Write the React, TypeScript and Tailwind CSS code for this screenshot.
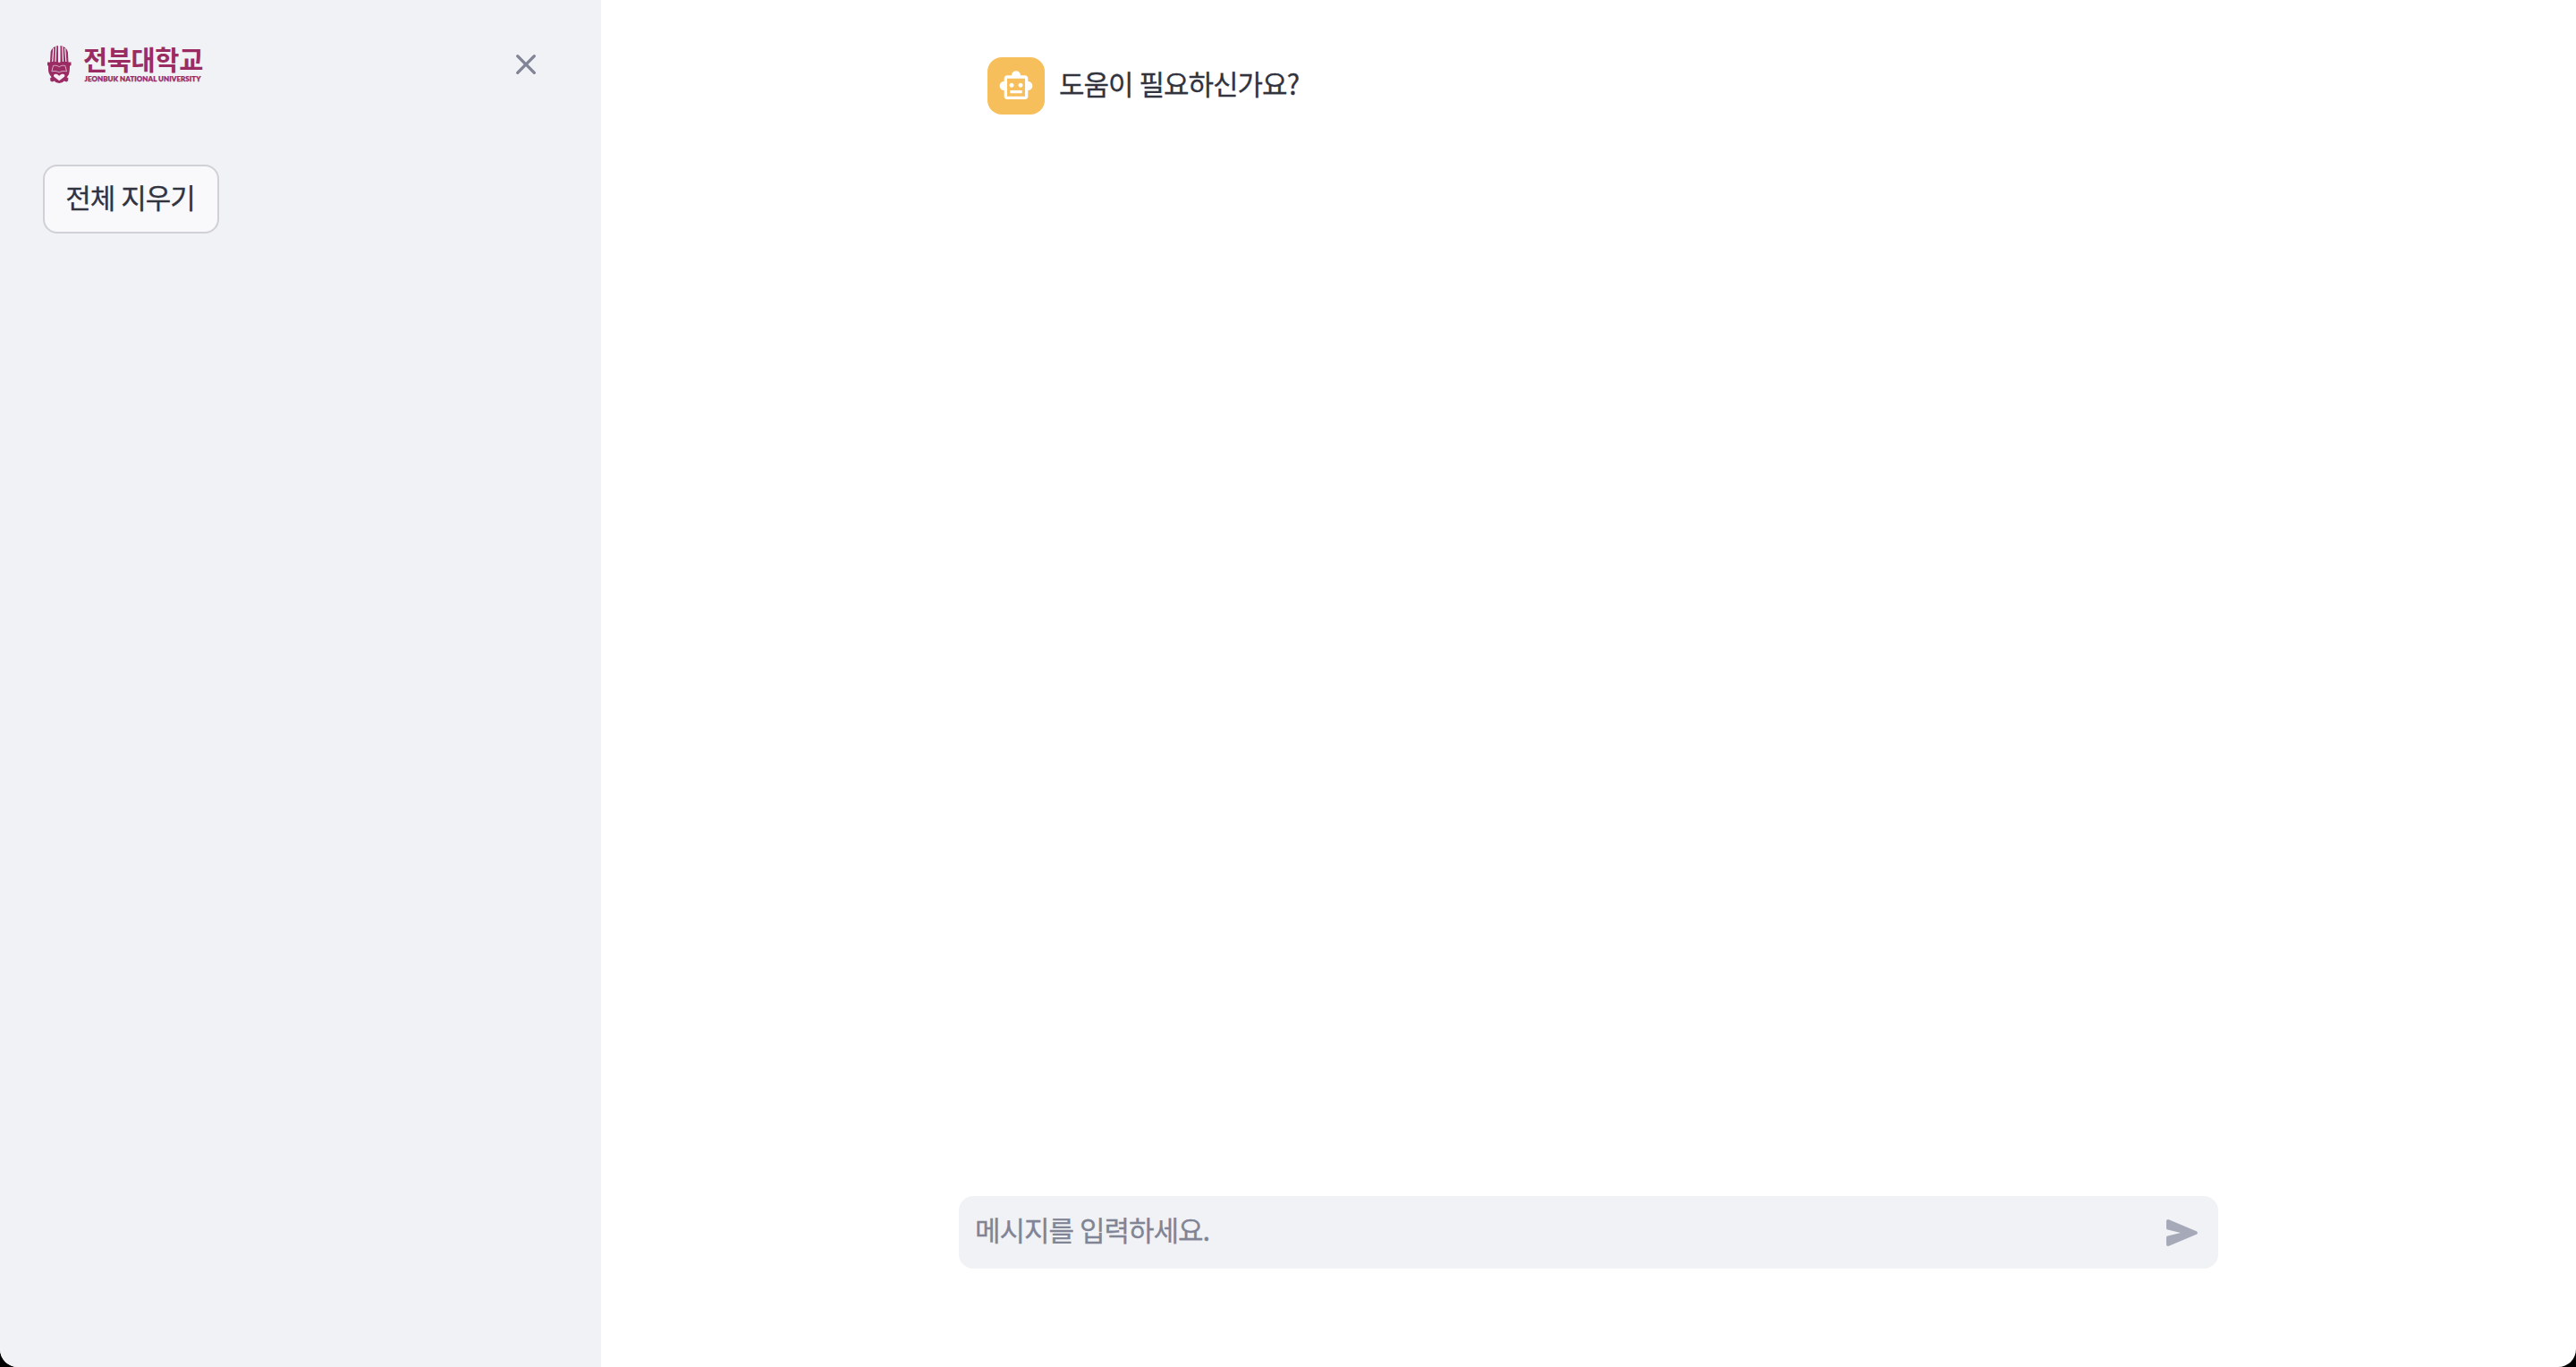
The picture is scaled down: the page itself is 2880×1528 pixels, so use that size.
function Crest() {
  return (
    <svg viewBox="0 0 28 44" className="h-11 w-7 shrink-0" fill="none">
      <path fill="#9b2c63" d="M1 19.500h26.500v3.500l-1.500.8c0 4-.2 7-1.200 9.700l-2 2.700 2 1.800-1 .8.600 1.200-2 1.500-2.900-1-1.500 1.500-3.800 1-3.800-1-1.500-1.500-2.900 1-2-1.500.6-1.200-1-.8 2-1.800-2-2.700C1.700 30.800 2 27.800 2 23.800L1 23z" />
      <path fill="#9b2c63" d="M4 20l.6-11.500C5 5 8.500 1.800 13 1v19zM24.500 20l-.6-11.500C23.500 5 20 1.800 15.500 1v19z" />
      <path stroke="#f0f2f6" strokeWidth="1.200" d="M7.800 4l-1.100 15M10.700 2l-.7 17M17.800 2l.7 17M20.700 4l1.100 15" />
      <path stroke="#f0f2f6" strokeWidth="1.400" d="M14.250 1v18.500" />
      <path stroke="#dcb9cd" strokeWidth=".9" d="M7.500 23.500c2.500-.6 4.800-.3 6.700 1.200 2-1.500 4.300-1.800 6.700-1.200l1.600 6.300c-3-.6-6-.3-8.300 1-2.500-1.300-5.500-1.600-8.300-1z" />
      <path fill="#f6eef4" d="M14.200 40.300l-5.800-4.600c-1.200-1.600.2-3.300 2.200-3 1.600.3 2.800 1.100 3.600 2.100.8-1 2-1.800 3.600-2.100 2-.3 3.400 1.400 2.200 3z" />
    </svg>
  );
}

function Logo() {
  return (
    <div className="flex items-start text-[#9b2c63]">
      <Crest />
      <div className="ml-[13px] pt-px">
        <div className="h-[33px] whitespace-nowrap text-[29.500px] font-bold leading-[28px] tracking-[-0.350px]">전북대학교</div>
        <svg width="132" height="8" className="overflow-visible" fill="#9b2c63">
          <text x="1.500" y="6.500" textLength="130" lengthAdjust="spacing" fontSize="7.900" fontWeight="800" fontFamily="Lato, sans-serif" stroke="#9b2c63" strokeWidth=".25">
            JEONBUK NATIONAL UNIVERSITY
          </text>
        </svg>
      </div>
    </div>
  );
}

function Sidebar() {
  return (
    <aside className="flex w-[672px] shrink-0 flex-col bg-[#f0f2f6]">
      <header className="flex h-[184px] items-start justify-between pl-[52px] pr-16 pt-[50px]">
        <Logo />
        <button aria-label="닫기" className="mt-0.5">
          <svg viewBox="0 0 24 24" className="size-10" fill="#808495">
            <path d="M18.300 5.710a.996.996 0 0 0-1.410 0L12 10.590 7.110 5.700A.996.996 0 1 0 5.700 7.110L10.590 12 5.700 16.890a.996.996 0 1 0 1.410 1.410L12 13.410l4.890 4.890a.996.996 0 1 0 1.410-1.410L13.410 12l4.890-4.890c.38-.38.38-1.020 0-1.400z" />
          </svg>
        </button>
      </header>
      <button className="ml-12 flex h-[77px] w-[197px] items-center justify-center rounded-2xl border-2 border-[#d0d1d6] bg-[#f9f9fb] pb-1 pr-0.5 text-[31px] tracking-[-1px] [-webkit-text-stroke:0.3px] [word-spacing:1px]">
        전체 지우기
      </button>
    </aside>
  );
}

function Message() {
  return (
    <div className="flex h-16 items-center gap-4">
      <div className="flex size-16 items-center justify-center rounded-2xl bg-[#f6bf5c]">
        <svg viewBox="0 0 24 24" className="size-10" fill="white">
          <path d="M20 9V7c0-1.100-.9-2-2-2h-3c0-1.660-1.340-3-3-3S9 3.340 9 5H6c-1.100 0-2 .9-2 2v2c-1.660 0-3 1.340-3 3s1.340 3 3 3v4c0 1.100.9 2 2 2h12c1.100 0 2-.9 2-2v-4c1.660 0 3-1.340 3-3s-1.340-3-3-3zm-2 10H6V7h12v12zm-9-6c-.83 0-1.500-.67-1.500-1.500S8.170 10 9 10s1.500.67 1.500 1.500S9.830 13 9 13zm7.500-1.500c0 .83-.67 1.500-1.500 1.500s-1.500-.67-1.500-1.500.67-1.500 1.500-1.500 1.500.67 1.500 1.500zM8 15h8v2H8v-2z" />
        </svg>
      </div>
      <p className="pb-1.5 text-[31px] leading-[48px] tracking-[-1px] [-webkit-text-stroke:0.3px] [word-spacing:1px]">도움이 필요하신가요?</p>
    </div>
  );
}

function ChatInput() {
  return (
    <div className="flex h-[81px] w-full items-center rounded-2xl bg-[#f0f2f6] pl-[18px] pr-4">
      <span className="flex-1 pb-1.5 text-[31px] tracking-[-1px] text-[#808495] [-webkit-text-stroke:0.3px] [word-spacing:1px]">메시지를 입력하세요.</span>
      <button aria-label="보내기">
        <svg viewBox="0 0 24 24" className="size-12" fill="#a6a9b8">
          <path d="M3 5.510v3.710c0 .46.31.86.76.97L11 12l-7.240 1.810c-.45.12-.76.52-.76.98v3.710c0 .72.73 1.200 1.390.92l15.420-6.490c.82-.34.82-1.500 0-1.840L4.390 4.580C3.730 4.310 3 4.790 3 5.510z" />
        </svg>
      </button>
    </div>
  );
}

export default function App() {
  return (
    <div className="h-[1528px] w-[2880px] bg-black font-['Noto_Sans_CJK_KR',sans-serif] text-[#31333f]">
      <div className="flex h-full overflow-hidden rounded-b-[20px] bg-white">
        <Sidebar />
        <main className="flex flex-1 justify-center">
          <div className="flex w-[1408px] flex-col justify-between pb-[110px] pt-16">
            <div className="pl-8">
              <Message />
            </div>
            <ChatInput />
          </div>
        </main>
      </div>
    </div>
  );
}
